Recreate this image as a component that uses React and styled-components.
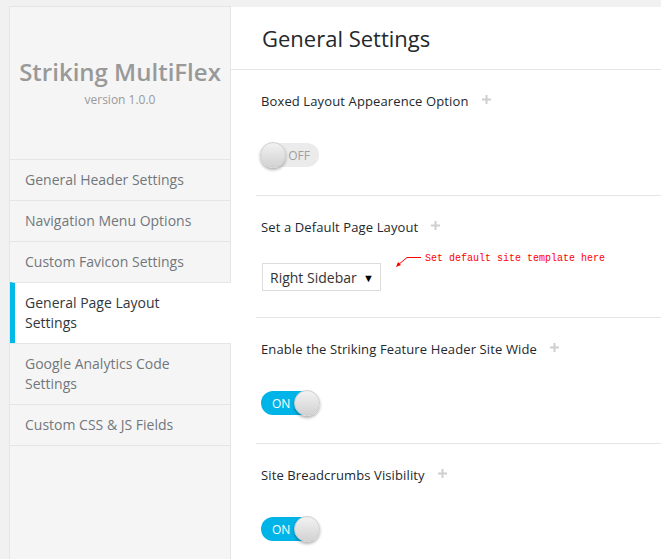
import React from "react";
import styled, { createGlobalStyle } from "styled-components";

const GlobalStyle = createGlobalStyle`
  html, body {
    margin: 0;
    padding: 0;
    background: #f1f1f1;
    font-family: "Open Sans", "Noto Sans", sans-serif;
  }
  * {
    box-sizing: border-box;
  }
`;

const Page = styled.div`
  display: flex;
  height: 559px;
  padding: 6px 0 0 9px;
  overflow: hidden;
`;

const Sidebar = styled.div`
  width: 222px;
  flex-shrink: 0;
  background: #f5f5f5;
  border: 1px solid #e5e5e5;
  border-bottom: none;
  display: flex;
  flex-direction: column;
`;

const Brand = styled.div`
  height: 152px;
  flex-shrink: 0;
  display: flex;
  flex-direction: column;
  align-items: center;
  justify-content: center;
  padding-bottom: 1px;
`;

const BrandTitle = styled.div`
  font-size: 24px;
  font-weight: 600;
  color: #999;
  line-height: 30px;
`;

const BrandVersion = styled.div`
  font-size: 12px;
  color: #999;
  line-height: 16px;
  margin-top: 5px;
`;

const Menu = styled.ul`
  list-style: none;
  margin: 0;
  padding: 0;
  border-bottom: 1px solid #e5e5e5;
`;

const MenuItem = styled.li`
  border-top: 1px solid #e5e5e5;
  padding: 10px 20px 10px ${(p) => (p.$active ? "10px" : "15px")};
  border-left: ${(p) => (p.$active ? "5px solid #00b9eb" : "none")};
  background: ${(p) => (p.$active ? "#fff" : "transparent")};
  margin-right: ${(p) => (p.$active ? "-1px" : "0")};
  font-size: 14px;
  line-height: 20px;
  color: ${(p) => (p.$active ? "#32373c" : "#72777c")};
`;

const Main = styled.div`
  flex: 1;
  background: #fff;
  margin-top: 1px;
  display: flex;
  flex-direction: column;
`;

const Header = styled.div`
  height: 63px;
  flex-shrink: 0;
  border-bottom: 1px solid #e5e5e5;
  padding: 0 0 0 31px;
  display: flex;
  align-items: center;
`;

const Title = styled.h1`
  margin: 0;
  font-size: 22px;
  font-weight: 400;
  color: #23282d;
  line-height: 28px;
`;

const Section = styled.div`
  flex-shrink: 0;
  margin-left: 25px;
  padding: 21px 0 ${(p) => p.$bottom || 28}px 5px;
  border-bottom: 1px solid #e5e5e5;
`;

const Label = styled.div`
  display: flex;
  align-items: center;
  font-size: 13px;
  font-weight: 500;
  letter-spacing: 0.12px;
  line-height: 20px;
  color: #23282d;
`;

const PlusIcon = styled.svg`
  margin-left: 13px;
  margin-top: -4px;
`;

const Plus = () => (
  <PlusIcon width="9" height="9" viewBox="0 0 9 9">
    <rect x="3.5" y="0" width="2" height="9" fill="#cfcfcf" />
    <rect x="0" y="3.5" width="9" height="2" fill="#cfcfcf" />
  </PlusIcon>
);

const Track = styled.div`
  position: relative;
  margin-top: ${(p) => p.$top || 32}px;
  width: 58px;
  height: 24px;
  border-radius: 12px;
  background: ${(p) => (p.$on ? "#00b4e8" : "#ebebeb")};
  display: flex;
  align-items: center;
  justify-content: ${(p) => (p.$on ? "flex-start" : "flex-end")};
  padding: ${(p) => (p.$on ? "0 0 0 11px" : "0 9px 0 0")};
  font-size: 12px;
  color: ${(p) => (p.$on ? "#fff" : "#a0a0a0")};
`;

const Knob = styled.div`
  position: absolute;
  top: -1px;
  ${(p) => (p.$on ? "right: -1px;" : "left: -1px;")}
  width: 26px;
  height: 26px;
  border-radius: 50%;
  background: linear-gradient(#f2f2f2, #d2d2d2);
  border: 1px solid #cfcfcf;
  box-shadow: 0 2px 3px rgba(0, 0, 0, 0.3);
`;

const Toggle = ({ on, top }) => (
  <Track $on={on} $top={top}>
    {on ? "ON" : "OFF"}
    <Knob $on={on} />
  </Track>
);

const SelectRow = styled.div`
  display: flex;
  align-items: flex-start;
  margin-top: 26px;
`;

const Select = styled.div`
  width: 119px;
  height: 28px;
  margin-left: 1px;
  border: 1px solid #dcdcdc;
  display: flex;
  align-items: center;
  justify-content: space-between;
  padding: 0 6px 0 7px;
  font-size: 14px;
  color: #333;
`;

const Caret = styled.span`
  font-size: 11px;
  color: #000;
`;

const Note = styled.div`
  display: flex;
  align-items: center;
  margin: -9px 0 0 14px;
`;

const NoteText = styled.span`
  font-family: "Liberation Mono", "DejaVu Sans Mono", monospace;
  font-size: 10px;
  color: #ff0000;
  margin-left: 4px;
  margin-top: -6px;
`;

const menu = [
  ["General Header Settings"],
  ["Navigation Menu Options"],
  ["Custom Favicon Settings"],
  ["General Page Layout", "Settings"],
  ["Google Analytics Code", "Settings"],
  ["Custom CSS & JS Fields"],
];

const App = () => {
  return (
    <Page>
      <GlobalStyle />
      <Sidebar>
        <Brand>
          <BrandTitle>Striking MultiFlex</BrandTitle>
          <BrandVersion>version 1.0.0</BrandVersion>
        </Brand>
        <Menu>
          {menu.map((lines, i) => (
            <MenuItem key={i} $active={i === 3}>
              {lines.map((l, j) => (
                <React.Fragment key={j}>
                  {j > 0 && <br />}
                  {l}
                </React.Fragment>
              ))}
            </MenuItem>
          ))}
        </Menu>
      </Sidebar>
      <Main>
        <Header>
          <Title>General Settings</Title>
        </Header>
        <Section>
          <Label>
            Boxed Layout Appearence Option <Plus />
          </Label>
          <Toggle on={false} />
        </Section>
        <Section $bottom={26}>
          <Label>
            Set a Default Page Layout <Plus />
          </Label>
          <SelectRow>
            <Select>
              Right Sidebar <Caret>▼</Caret>
            </Select>
            <Note>
              <svg width="26" height="14" viewBox="0 0 26 14">
                <path d="M26 3.5 H12 L3 11" stroke="#ff0000" strokeWidth="1" fill="none" />
                <path d="M1 13 L3 8 L6 11 Z" fill="#ff0000" />
              </svg>
              <NoteText>Set default site template here</NoteText>
            </Note>
          </SelectRow>
        </Section>
        <Section>
          <Label>
            Enable the Striking Feature Header Site Wide <Plus />
          </Label>
          <Toggle on />
        </Section>
        <Section>
          <Label>
            Site Breadcrumbs Visibility <Plus />
          </Label>
          <Toggle on />
        </Section>
      </Main>
    </Page>
  );
};

export default App;
